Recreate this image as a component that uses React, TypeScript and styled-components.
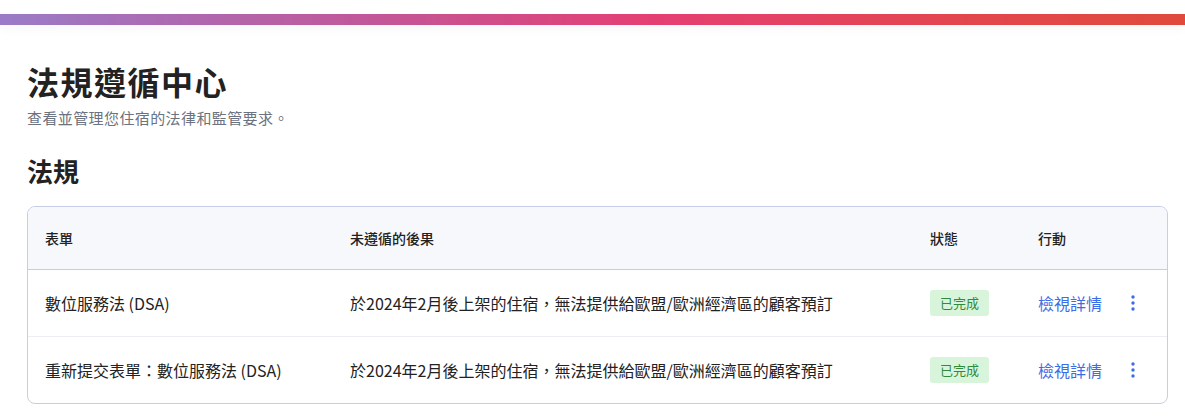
import React from 'react';
import styled, { createGlobalStyle } from 'styled-components';

const GlobalStyle = createGlobalStyle`
  body {
    margin: 0;
    background: #fff;
    font-family: "Noto Sans CJK TC", "Noto Sans", sans-serif;
    color: #222;
  }
`;

const TopBand = styled.div`
  padding-top: 14px;
`;

const GradientBar = styled.div`
  height: 11px;
  background: linear-gradient(90deg, #9a7bc7 0%, #c0589a 30%, #e43f73 55%, #e2464f 80%, #e04a3c 100%);
  box-shadow: 0 4px 12px rgba(0, 0, 0, 0.035);
`;

const Main = styled.main`
  padding: 37px 17px 0 27px;
`;

const Title = styled.h1`
  margin: 0;
  font-size: 32px;
  line-height: 38px;
  font-weight: 700;
  letter-spacing: 1.5px;
  color: #222;
`;

const Subtitle = styled.p`
  margin: 8px 0 0;
  font-size: 15px;
  line-height: 20px;
  letter-spacing: 0.4px;
  color: #6b7280;
`;

const SectionTitle = styled.h2`
  margin: 26px 0 0;
  font-size: 26px;
  line-height: 34px;
  font-weight: 700;
  color: #222;
`;

const Card = styled.div`
  margin-top: 18px;
  border: 1px solid #c7cde6;
  border-radius: 8px;
  overflow: hidden;
`;

const Table = styled.table`
  width: 100%;
  border-collapse: collapse;
  table-layout: fixed;
`;

const HeadRow = styled.tr`
  background: #f7f8fc;
  height: 62px;
  border-bottom: 1px solid #c7cde6;
`;

const Th = styled.th`
  padding: 0 0 0 17px;
  text-align: left;
  font-size: 14px;
  font-weight: 500;
  color: #222;
`;

const Row = styled.tr<{ $last?: boolean }>`
  height: 67px;
  border-bottom: ${(p) => (p.$last ? 'none' : '1px solid #eceef3')};
`;

const Td = styled.td`
  padding: 0 0 0 17px;
  font-size: 16px;
  color: #222;
  white-space: nowrap;
`;

const Badge = styled.span`
  display: inline-block;
  padding: 4px 10px;
  border-radius: 3px;
  background: #d8f5dc;
  color: #2f8a3c;
  font-size: 13px;
  line-height: 18px;
`;

const Actions = styled.div`
  display: flex;
  align-items: center;
`;

const Link = styled.a`
  color: #3d6de6;
  font-size: 16px;
  text-decoration: none;
  cursor: pointer;
`;

const Kebab = styled.button`
  margin-left: 25px;
  background: transparent;
  border: none;
  padding: 4px;
  display: inline-flex;
  cursor: pointer;
`;

const rows = [
  { form: '數位服務法 (DSA)' },
  { form: '重新提交表單：數位服務法 (DSA)' },
];

const consequence = '於2024年2月後上架的住宿，無法提供給歐盟/歐洲經濟區的顧客預訂';

const Dots = () => (
  <svg width="4" height="16" viewBox="0 0 4 16">
    <circle cx="2" cy="2" r="1.7" fill="#3d6de6" />
    <circle cx="2" cy="8" r="1.7" fill="#3d6de6" />
    <circle cx="2" cy="14" r="1.7" fill="#3d6de6" />
  </svg>
);

export default function App() {
  return (
    <>
      <GlobalStyle />
      <TopBand>
        <GradientBar />
      </TopBand>
      <Main>
        <Title>法規遵循中心</Title>
        <Subtitle>查看並管理您住宿的法律和監管要求。</Subtitle>
        <SectionTitle>法規</SectionTitle>
        <Card>
          <Table>
            <colgroup>
              <col style={{ width: 305 }} />
              <col style={{ width: 580 }} />
              <col style={{ width: 108 }} />
              <col />
            </colgroup>
            <thead>
              <HeadRow>
                <Th>表單</Th>
                <Th>未遵循的後果</Th>
                <Th>狀態</Th>
                <Th>行動</Th>
              </HeadRow>
            </thead>
            <tbody>
              {rows.map((r, i) => (
                <Row key={r.form} $last={i === rows.length - 1}>
                  <Td>{r.form}</Td>
                  <Td>{consequence}</Td>
                  <Td>
                    <Badge>已完成</Badge>
                  </Td>
                  <Td>
                    <Actions>
                      <Link>檢視詳情</Link>
                      <Kebab aria-label="更多">
                        <Dots />
                      </Kebab>
                    </Actions>
                  </Td>
                </Row>
              ))}
            </tbody>
          </Table>
        </Card>
      </Main>
    </>
  );
}
